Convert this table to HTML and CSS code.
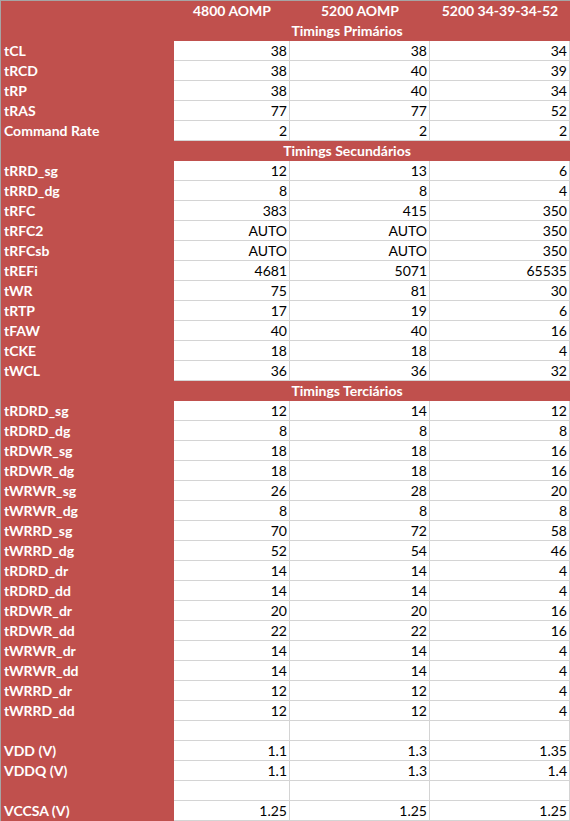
FILE: index.html
```html
<!DOCTYPE html>
<html>
<head>
<meta charset="utf-8">
<link rel="stylesheet" href="styles.css">
</head>
<body>
<div class="sheet">
  <div class="row head">
    <div class="lbl"></div>
    <div class="hc">4800 AOMP</div>
    <div class="hc">5200 AOMP</div>
    <div class="hc">5200 34-39-34-52</div>
  </div>
  <div class="row sec"><div class="lbl"></div><div class="sect">Timings Primários</div></div>
  <div class="row"><div class="lbl">tCL</div><div class="c">38</div><div class="c">38</div><div class="c">34</div></div>
  <div class="row"><div class="lbl">tRCD</div><div class="c">38</div><div class="c">40</div><div class="c">39</div></div>
  <div class="row"><div class="lbl">tRP</div><div class="c">38</div><div class="c">40</div><div class="c">34</div></div>
  <div class="row"><div class="lbl">tRAS</div><div class="c">77</div><div class="c">77</div><div class="c">52</div></div>
  <div class="row"><div class="lbl">Command Rate</div><div class="c">2</div><div class="c">2</div><div class="c">2</div></div>
  <div class="row sec"><div class="lbl"></div><div class="sect">Timings Secundários</div></div>
  <div class="row"><div class="lbl">tRRD_sg</div><div class="c">12</div><div class="c">13</div><div class="c">6</div></div>
  <div class="row"><div class="lbl">tRRD_dg</div><div class="c">8</div><div class="c">8</div><div class="c">4</div></div>
  <div class="row"><div class="lbl">tRFC</div><div class="c">383</div><div class="c">415</div><div class="c">350</div></div>
  <div class="row"><div class="lbl">tRFC2</div><div class="c">AUTO</div><div class="c">AUTO</div><div class="c">350</div></div>
  <div class="row"><div class="lbl">tRFCsb</div><div class="c">AUTO</div><div class="c">AUTO</div><div class="c">350</div></div>
  <div class="row"><div class="lbl">tREFi</div><div class="c">4681</div><div class="c">5071</div><div class="c">65535</div></div>
  <div class="row"><div class="lbl">tWR</div><div class="c">75</div><div class="c">81</div><div class="c">30</div></div>
  <div class="row"><div class="lbl">tRTP</div><div class="c">17</div><div class="c">19</div><div class="c">6</div></div>
  <div class="row"><div class="lbl">tFAW</div><div class="c">40</div><div class="c">40</div><div class="c">16</div></div>
  <div class="row"><div class="lbl">tCKE</div><div class="c">18</div><div class="c">18</div><div class="c">4</div></div>
  <div class="row"><div class="lbl">tWCL</div><div class="c">36</div><div class="c">36</div><div class="c">32</div></div>
  <div class="row sec"><div class="lbl"></div><div class="sect">Timings Terciários</div></div>
  <div class="row"><div class="lbl">tRDRD_sg</div><div class="c">12</div><div class="c">14</div><div class="c">12</div></div>
  <div class="row"><div class="lbl">tRDRD_dg</div><div class="c">8</div><div class="c">8</div><div class="c">8</div></div>
  <div class="row"><div class="lbl">tRDWR_sg</div><div class="c">18</div><div class="c">18</div><div class="c">16</div></div>
  <div class="row"><div class="lbl">tRDWR_dg</div><div class="c">18</div><div class="c">18</div><div class="c">16</div></div>
  <div class="row"><div class="lbl">tWRWR_sg</div><div class="c">26</div><div class="c">28</div><div class="c">20</div></div>
  <div class="row"><div class="lbl">tWRWR_dg</div><div class="c">8</div><div class="c">8</div><div class="c">8</div></div>
  <div class="row"><div class="lbl">tWRRD_sg</div><div class="c">70</div><div class="c">72</div><div class="c">58</div></div>
  <div class="row"><div class="lbl">tWRRD_dg</div><div class="c">52</div><div class="c">54</div><div class="c">46</div></div>
  <div class="row"><div class="lbl">tRDRD_dr</div><div class="c">14</div><div class="c">14</div><div class="c">4</div></div>
  <div class="row"><div class="lbl">tRDRD_dd</div><div class="c">14</div><div class="c">14</div><div class="c">4</div></div>
  <div class="row"><div class="lbl">tRDWR_dr</div><div class="c">20</div><div class="c">20</div><div class="c">16</div></div>
  <div class="row"><div class="lbl">tRDWR_dd</div><div class="c">22</div><div class="c">22</div><div class="c">16</div></div>
  <div class="row"><div class="lbl">tWRWR_dr</div><div class="c">14</div><div class="c">14</div><div class="c">4</div></div>
  <div class="row"><div class="lbl">tWRWR_dd</div><div class="c">14</div><div class="c">14</div><div class="c">4</div></div>
  <div class="row"><div class="lbl">tWRRD_dr</div><div class="c">12</div><div class="c">12</div><div class="c">4</div></div>
  <div class="row"><div class="lbl">tWRRD_dd</div><div class="c">12</div><div class="c">12</div><div class="c">4</div></div>
  <div class="row"><div class="lbl"></div><div class="c"></div><div class="c"></div><div class="c"></div></div>
  <div class="row"><div class="lbl">VDD (V)</div><div class="c">1.1</div><div class="c">1.3</div><div class="c">1.35</div></div>
  <div class="row"><div class="lbl">VDDQ (V)</div><div class="c">1.1</div><div class="c">1.3</div><div class="c">1.4</div></div>
  <div class="row"><div class="lbl"></div><div class="c"></div><div class="c"></div><div class="c"></div></div>
  <div class="row"><div class="lbl">VCCSA (V)</div><div class="c">1.25</div><div class="c">1.25</div><div class="c">1.25</div></div>
</div>
</body>
</html>
```

FILE: styles.css
```css
html, body {
  margin: 0;
  padding: 0;
  background: #ffffff;
}
.sheet {
  width: 569px;
  border-top: 1px solid #a5a5a5;
  border-left: 1px solid #a5a5a5;
  font-family: Lato, "Open Sans", sans-serif;
  font-size: 14px;
  color: #000000;
}
.row {
  display: grid;
  grid-template-columns: 173px 116px 140px 140px;
  height: 20px;
}
.row > div {
  box-sizing: border-box;
  height: 20px;
  line-height: 20px;
  white-space: nowrap;
  overflow: visible;
}
.lbl {
  background: #c0504d;
  color: #ffffff;
  font-weight: 700;
  padding-left: 3px;
}
.c {
  background: #ffffff;
  border-right: 1px solid #d4d4d4;
  border-bottom: 1px solid #d4d4d4;
  text-align: right;
  padding-right: 2px;
  line-height: 19px !important;
}
.head {
  background: #c0504d;
}
.hc {
  background: #c0504d;
  color: #ffffff;
  font-weight: 700;
  text-align: center;
}
.sec {
  background: #c0504d;
}
.sect {
  grid-column: 2 / 5;
  color: #ffffff;
  font-weight: 700;
  text-align: center;
  padding-right: 50px;
}
```
